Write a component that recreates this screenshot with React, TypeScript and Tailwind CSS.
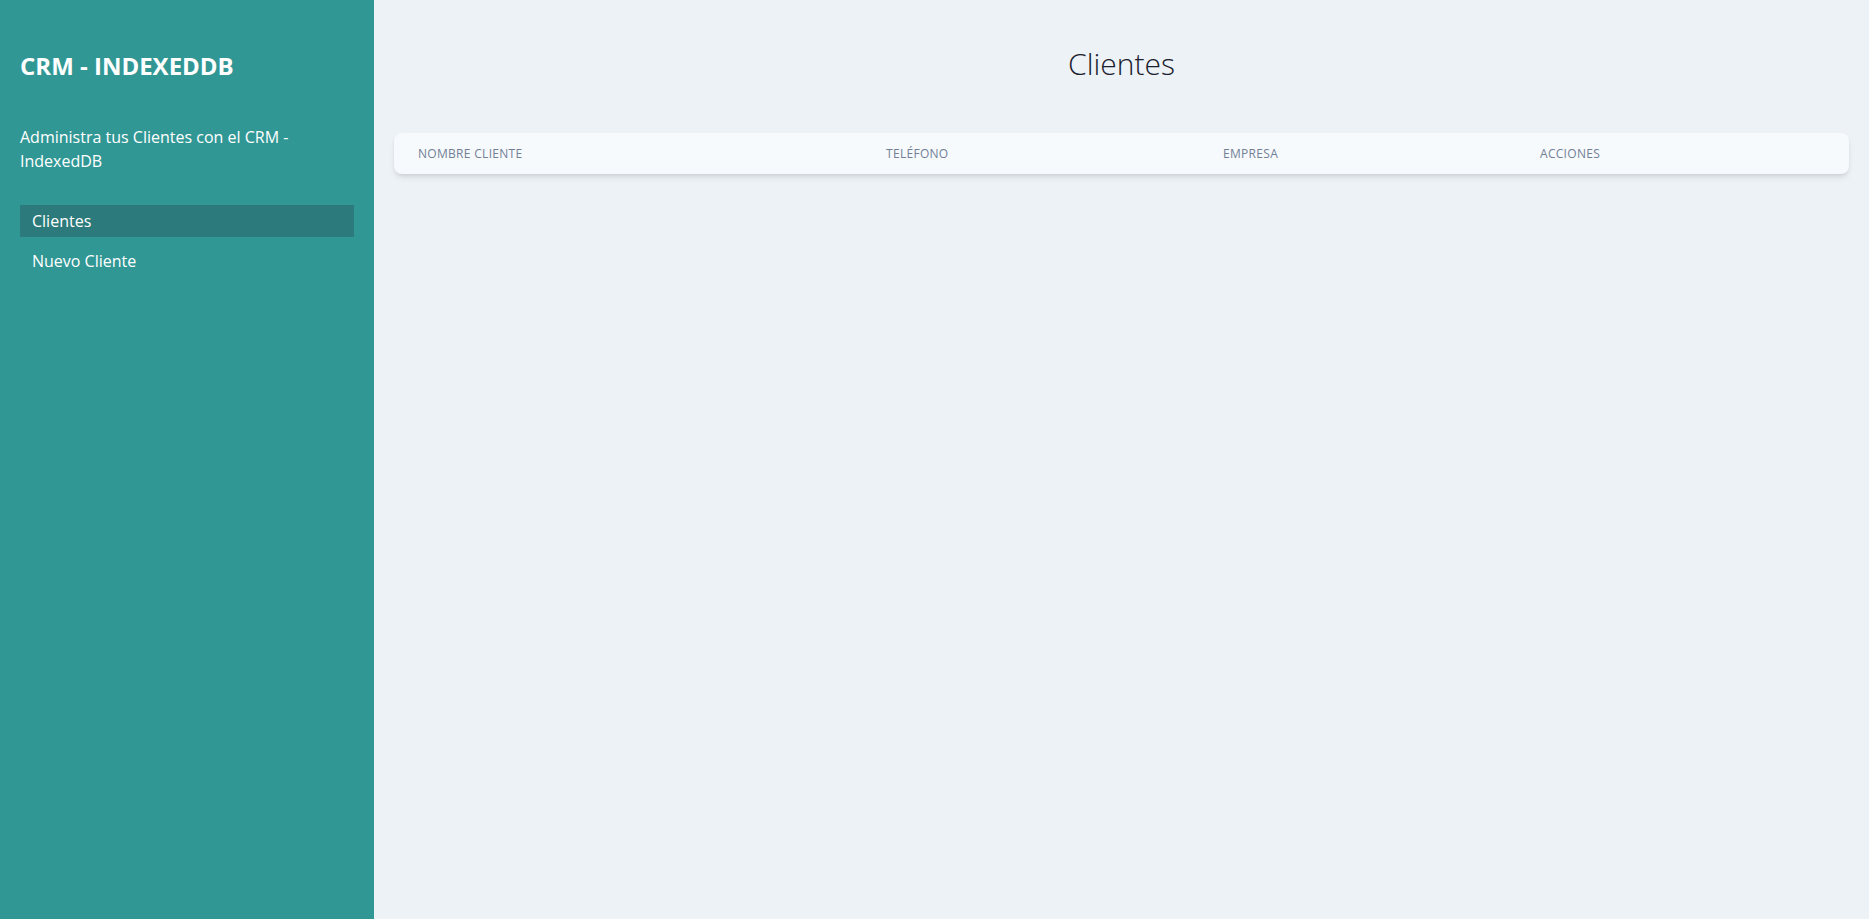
export default function App() {
  const columns = [
    { label: 'Nombre Cliente', width: 'w-[468px]' },
    { label: 'Teléfono', width: 'w-[337px]' },
    { label: 'Empresa', width: 'w-[317px]' },
    { label: 'Acciones', width: '' },
  ];

  return (
    <div className="flex min-h-screen font-['Open_Sans',sans-serif]">
      <aside className="w-[374px] shrink-0 bg-[#319795] px-5 text-white">
        <h1 className="pt-[50px] text-2xl leading-8 font-bold uppercase">CRM - IndexedDB</h1>
        <p className="mt-[43px] text-base leading-6">Administra tus Clientes con el CRM - IndexedDB</p>

        <nav className="mt-[32px] space-y-2">
          <a href="#" className="block h-8 bg-[#2c7a7b] px-3 py-1 text-base leading-6">Clientes</a>
          <a href="#" className="block h-8 px-3 py-1 text-base leading-6">Nuevo Cliente</a>
        </nav>
      </aside>

      <main className="flex-1 bg-[#edf2f7] px-5 pt-[46px]">
        <h2 className="text-center text-3xl leading-9 font-light text-[#1a202c]">Clientes</h2>

        <table className="mt-[51px] w-full table-fixed overflow-hidden rounded-lg bg-[#f7fafc] shadow-md">
          <thead>
            <tr>
              {columns.map((c) => (
                <th
                  key={c.label}
                  className={`${c.width} h-[41px] px-6 text-left text-xs font-normal uppercase tracking-wide text-[#718096]`}
                >
                  {c.label}
                </th>
              ))}
            </tr>
          </thead>
          <tbody></tbody>
        </table>
      </main>
    </div>
  );
}
